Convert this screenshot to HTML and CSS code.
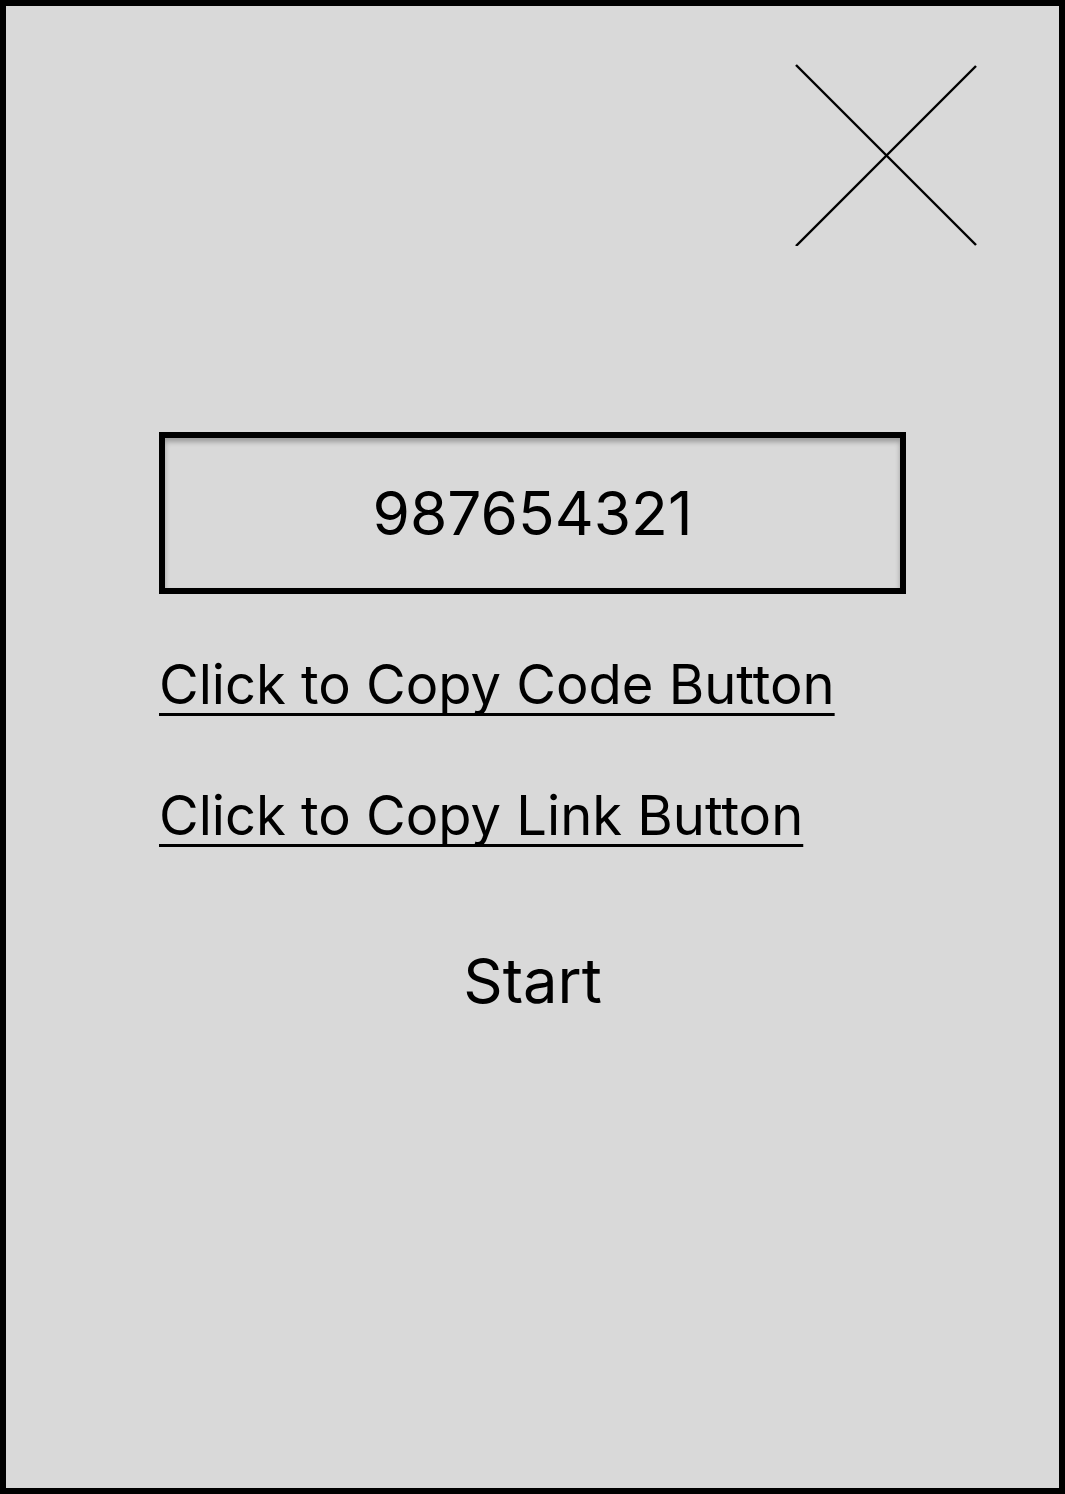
FILE: index.html
```html
<!DOCTYPE html>
<html lang="en">
<head>
<meta charset="utf-8">
<title>Share Code</title>
<link rel="stylesheet" href="styles.css">
</head>
<body>
<div class="frame">
  <div class="header">
    <button class="close" aria-label="Close">
      <svg width="182" height="182" viewBox="0 0 182 182">
        <line x1="1" y1="1" x2="181" y2="181" stroke="#000" stroke-width="2.4"/>
        <line x1="1" y1="182" x2="181" y2="2" stroke="#000" stroke-width="2.4"/>
      </svg>
    </button>
  </div>
  <div class="content">
    <div class="code-box">987654321</div>
    <a class="link first" href="#">Click to Copy Code Button</a>
    <a class="link" href="#">Click to Copy Link Button</a>
    <button class="start">Start</button>
  </div>
</div>
</body>
</html>
```

FILE: styles.css
```css
html, body {
  margin: 0;
  padding: 0;
}

body {
  font-family: Inter, "Noto Sans", sans-serif;
  color: #000;
}

.frame {
  box-sizing: border-box;
  width: 1065px;
  height: 1494px;
  border: 6px solid #000;
  background: #d9d9d9;
  display: flex;
  flex-direction: column;
}

.header {
  display: flex;
  justify-content: flex-end;
  padding: 58px 82px 0 0;
}

.close {
  background: none;
  border: 0;
  padding: 0;
  margin: 0;
  display: block;
  width: 182px;
  height: 182px;
}

.close svg {
  display: block;
}

.content {
  display: flex;
  flex-direction: column;
  align-items: flex-start;
  padding-left: 153px;
  padding-top: 186px;
}

.code-box {
  box-sizing: border-box;
  width: 747px;
  height: 162px;
  border: 6px solid #000;
  box-shadow: inset 0 4px 5px rgba(0, 0, 0, 0.28);
  display: flex;
  align-items: center;
  justify-content: center;
  font-size: 60.4px;
  line-height: 1;
}

.link {
  color: #000;
  font-size: 54.3px;
  line-height: 64px;
  text-decoration: underline;
  text-decoration-thickness: 3px;
  text-underline-offset: 9px;
  text-decoration-skip-ink: none;
  margin-top: 67px;
}

.link.first {
  margin-top: 58px;
}

.start {
  align-self: flex-start;
  margin: 102px 0 0 0;
  width: 747px;
  background: none;
  border: 0;
  padding: 0;
  font-family: Inter, "Noto Sans", sans-serif;
  font-size: 61.5px;
  line-height: 64px;
  color: #000;
}
```
